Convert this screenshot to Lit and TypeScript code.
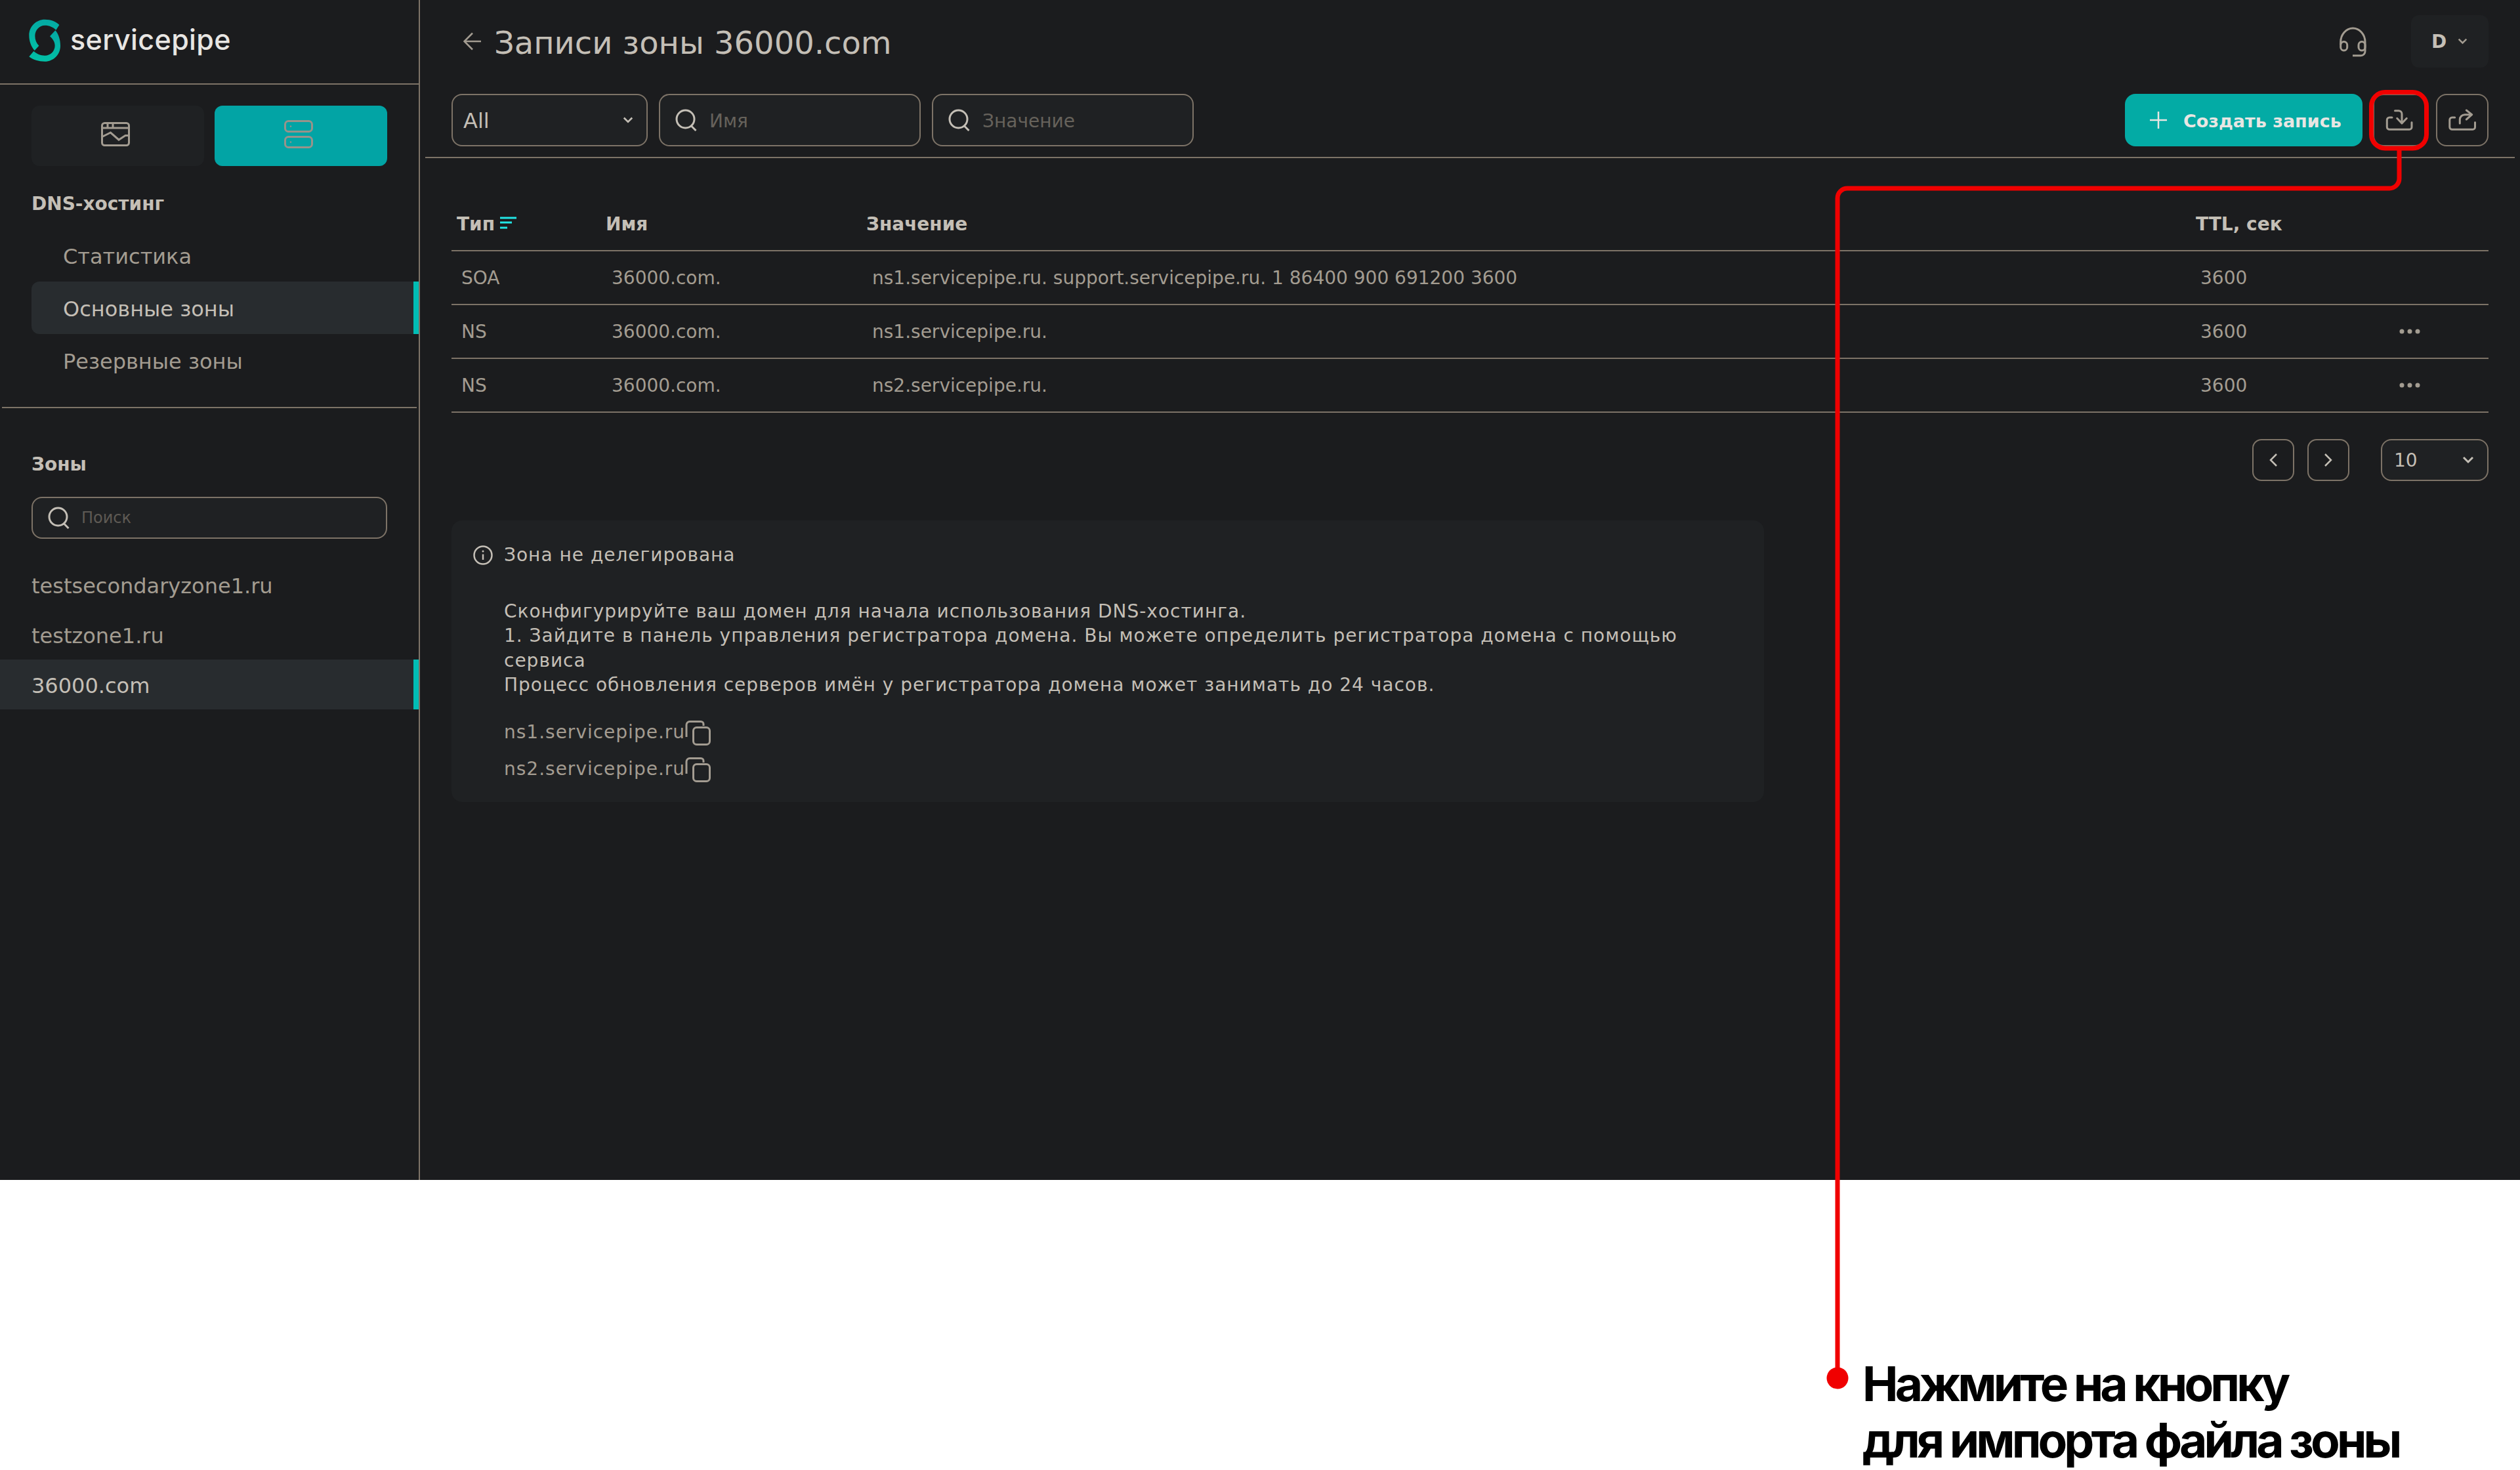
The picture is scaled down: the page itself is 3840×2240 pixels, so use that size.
import { LitElement, html, css, svg } from "lit";
import { customElement } from "lit/decorators.js";

const search = html`<svg class="search" width="34" height="34" viewBox="0 0 34 34" fill="none" stroke="currentColor" stroke-width="3"><circle cx="15.5" cy="15.5" r="13.5"/><path d="M24.5 26l7 7"/></svg>`;
const chevronDown = html`<svg width="18" height="12" viewBox="0 0 18 12" fill="none" stroke="currentColor" stroke-width="3"><path d="M2 2l7 7 7-7"/></svg>`;
const copy = html`<svg class="copy" width="40" height="40" viewBox="0 0 40 40" fill="none" stroke="currentColor" stroke-width="3"><rect x="12.500" y="11.500" width="25" height="26" rx="5"/><path d="M28 9V6.500a4 4 0 0 0-4-4H7a5 5 0 0 0-5 5V26"/></svg>`;
const dots = html`<svg width="32" height="8" viewBox="0 0 32 8" fill="currentColor"><circle cx="4" cy="4" r="3.500"/><circle cx="16" cy="4" r="3.500"/><circle cx="28" cy="4" r="3.500"/></svg>`;

const rows = [
  { t: "SOA", n: "36000.com.", v: "ns1.servicepipe.ru. support.servicepipe.ru. 1 86400 900 691200 3600", ttl: "3600", more: false },
  { t: "NS", n: "36000.com.", v: "ns1.servicepipe.ru.", ttl: "3600", more: true },
  { t: "NS", n: "36000.com.", v: "ns2.servicepipe.ru.", ttl: "3600", more: true },
];

@customElement("app-root")
export class AppRoot extends LitElement {
  static styles = css`
    :host { display: block; width: 3840px; height: 2240px; position: relative; background: #fff; overflow: hidden; font-family: "DejaVu Sans", sans-serif; color: #c4bfb6; }
    * { box-sizing: border-box; }
    .shell { display: grid; grid-template-columns: 640px 1fr; height: 1798px; background: #1b1c1e; }
    .side { border-right: 2px solid #7d7367; display: flex; flex-direction: column; }
    .brand { height: 129px; border-bottom: 2px solid #7d7367; display: flex; align-items: center; margin-right: -2px; padding-left: 36px; padding-bottom: 4px; gap: 0; }
    .brand svg { margin-top: 2px; }
    .brand span { font-family: Inter, sans-serif; font-weight: 500; font-size: 43px; color: #e8e6e3; margin-left: -9px; margin-top: -4px; letter-spacing: 0.4px; }
    .toggle { display: grid; grid-template-columns: 263px 263px; gap: 16px; margin: 32px 0 0 48px; }
    .toggle div { height: 92px; border-radius: 12px; background: #1f2123; display: flex; align-items: center; justify-content: center; color: #a39c91; }
    .toggle div svg { margin-right: 7px; margin-top: -5px; }
    .toggle .on { background: #02a4a5; color: #98938a; }
    .h { font-weight: 700; font-size: 28px; line-height: 32px; color: #c4bfb6; margin-left: 48px; }
    .dns { margin-top: 42px; }
    .nav { margin-top: 22px; display: flex; flex-direction: column; }
    .nav div { height: 80px; margin-left: 48px; padding: 3px 0 0 48px; display: flex; align-items: center; font-size: 32px; color: #a39c91; border-radius: 12px 0 0 12px; }
    .nav .on { background: #282c2f; border-right: 8px solid #00bdb5; color: #c4bfb6; }
    .sep { height: 2px; background: #7d7367; margin: 31px 3px 0; }
    .zones { margin-top: 70px; }
    .side-search { margin: 33px 0 0 48px; width: 542px; height: 64px; border: 2px solid #7d7367; border-radius: 16px; background: #1f2123; display: flex; align-items: center; padding-left: 23px; gap: 17px; font-size: 24px; color: #5e5a54; }
    .side-search .search { color: #c4bfb6; }
    .list { margin-top: 32px; display: flex; flex-direction: column; }
    .list div { height: 76px; padding: 3px 0 0 48px; display: flex; align-items: center; font-size: 32px; color: #a39c91; }
    .list .on { background: #282c2f; border-right: 8px solid #00bdb5; color: #c4bfb6; }

    .main { display: flex; flex-direction: column; min-width: 0; }
    .top { margin-top: 23px; height: 80px; padding: 0 48px 0 66px; display: flex; align-items: center; }
    .title { font-size: 48px; line-height: 80px; margin-left: 19px; margin-top: 4px; flex: 1; }
    .headset { color: #a39c91; margin-right: 67px; margin-top: 2px; }
    .user { width: 118px; height: 80px; border-radius: 12px; background: #1f2123; display: flex; align-items: center; padding-left: 31px; gap: 17px; font-weight: 700; font-size: 28px; }
    .user svg { color: #a39c91; width: 15px; }
    .toolbar { margin: 40px 8px 0; padding: 0 40px 16px; border-bottom: 2px solid #7d7367; display: flex; gap: 17px; }
    .field { height: 80px; border: 2px solid #7d7367; border-radius: 16px; background: #1f2123; display: flex; align-items: center; }
    .sel { width: 299px; padding: 0 20px 0 16px; justify-content: space-between; font-size: 32px; color: #c4bfb6; }
    .sel svg { width: 16px; }
    .inp { width: 399px; padding-left: 23px; gap: 18px; font-size: 28px; color: #66625b; }
    .inp .search { color: #c4bfb6; }
    .sel span, .inp span, .create span { margin-top: 2px; }
    .spacer { flex: 1; }
    .create { width: 362px; height: 80px; border-radius: 16px; background: #03aba5; color: #e8e6e3; display: flex; align-items: center; padding-left: 37px; gap: 24px; font-weight: 700; font-size: 27px; margin-right: -1px; }
    .icon-btn { width: 80px; height: 80px; border: 2px solid #7d7367; border-radius: 16px; display: flex; align-items: center; justify-content: center; color: #a39c91; }
    .icon-btn.first { margin-right: -1px; }
    .table { margin: 0 48px; }
    .tr { display: grid; grid-template-columns: 229px 397px 2024px 310px 1fr; padding-left: 8px; border-bottom: 2px solid #7d7367; align-items: center; font-size: 28px; color: #a39c91; height: 82px; }
    .tr > span { padding-left: 7px; }
    .tr.head { height: 142px; padding-top: 60px; font-weight: 700; font-size: 28px; color: #c4bfb6; }
    .tr.head > span { padding-left: 0; display: flex; align-items: center; gap: 8px; }
    .tr.head > span:nth-child(2), .tr.head > span:nth-child(3) { margin-left: -2px; }
    .sort { display: block; margin-top: -2px; }
    .tr > .more { display: flex; padding-left: 0; }
    .pager { margin: 40px 48px 0; display: flex; justify-content: flex-end; }
    .pg { width: 64px; height: 64px; border: 2px solid #7d7367; border-radius: 14px; display: flex; align-items: center; justify-content: center; color: #c4bfb6; margin-right: 20px; }
    .pg.last { margin-right: 48px; }
    .per { width: 164px; height: 64px; padding: 0 20px 0 18px; justify-content: space-between; font-size: 28px; }
    .card { margin: 60px 0 0 48px; width: 2000px; height: 429px; border-radius: 16px; background: #1f2123; padding: 34px 80px 0 33px; font-size: 28px; line-height: 37.500px; letter-spacing: 1px; }
    .card-head { display: flex; align-items: center; gap: 17px; }
    .body { margin: 48px 0 0 47px; }
    .ns { margin: 35px 0 0 47px; display: flex; flex-direction: column; gap: 19px; color: #a39c91; }
    .ns div { display: flex; align-items: center; height: 37px; }
    .copy { margin-top: 1px; flex: none; }

    .note { position: absolute; left: 2838px; top: 2066px; font-family: Inter, sans-serif; font-weight: 700; font-size: 73px; line-height: 86px; letter-spacing: -4.900px; color: #000; white-space: nowrap; }
    .overlay { position: absolute; inset: 0; pointer-events: none; }
  `;

  render() {
    return html`
      <div class="shell">
        <aside class="side">
          <div class="brand">
            <svg width="80" height="80" viewBox="0 0 240 240">
              <defs><linearGradient id="lg" x1="0" y1="0" x2="0" y2="1"><stop offset="0" stop-color="#04a9a3"/><stop offset="1" stop-color="#02c0a6"/></linearGradient></defs>
              <path fill="url(#lg)" d="M163 45C150 30 125 20 97 20C57 20 25 52 25 92C25 120 35 145 50 162L70 140C58 128 52 112 52 95C52 68 72 47 97 47C118 47 135 55 148 68Z"/>
              <path fill="url(#lg)" d="M145 70L120 97C133 108 143 123 143 140C143 165 122 185 97 185C78 185 60 178 46 165L25 190C43 205 68 212 97 212C137 212 168 180 168 140C168 112 160 88 145 70Z"/>
            </svg>
            <span>servicepipe</span>
          </div>
          <div class="toggle">
            <div>
              <svg width="44" height="37" viewBox="0 0 44 37" fill="none" stroke="currentColor" stroke-width="3"><rect x="1.500" y="1.500" width="41" height="34" rx="4"/><path d="M1.500 9H42.500M10 1.500V9M18 1.500V9M1.500 22.500L14.500 16L27 27L37 20.500H42.500"/></svg>
            </div>
            <div class="on">
              <svg width="44" height="44" viewBox="0 0 44 44" fill="none" stroke="currentColor" stroke-width="3"><rect x="1.500" y="1.500" width="41" height="16" rx="5"/><rect x="1.500" y="25.500" width="41" height="16" rx="5"/><circle cx="10" cy="9.500" r="1.200" fill="currentColor" stroke="none"/><circle cx="10" cy="33.500" r="1.200" fill="currentColor" stroke="none"/></svg>
            </div>
          </div>
          <div class="h dns">DNS-хостинг</div>
          <div class="nav">
            <div>Статистика</div>
            <div class="on">Основные зоны</div>
            <div>Резервные зоны</div>
          </div>
          <div class="sep"></div>
          <div class="h zones">Зоны</div>
          <div class="side-search">${search}<span>Поиск</span></div>
          <div class="list">
            <div>testsecondaryzone1.ru</div>
            <div>testzone1.ru</div>
            <div class="on">36000.com</div>
          </div>
        </aside>
        <main class="main">
          <div class="top">
            <svg width="28" height="28" viewBox="0 0 28 28" fill="none" stroke="#a39c91" stroke-width="2.500"><path d="M27 14H2M14 1.500L1.500 14L14 26.500"/></svg>
            <div class="title">Записи зоны 36000.com</div>
            <svg class="headset" width="44" height="48" viewBox="13 8 44 48" fill="none" stroke="currentColor" stroke-width="3"><rect x="16.700" y="31.500" width="10" height="13.500" rx="5"/><rect x="44" y="31.500" width="10" height="13.500" rx="5"/><path d="M16.700 36V32a18.650 21 0 0 1 37.300 0V46a6.500 6.500 0 0 1-6.500 6.700H35"/></svg>
            <div class="user"><span>D</span>${chevronDown}</div>
          </div>
          <div class="toolbar">
            <div class="field sel"><span>All</span>${chevronDown}</div>
            <div class="field inp">${search}<span>Имя</span></div>
            <div class="field inp">${search}<span>Значение</span></div>
            <div class="spacer"></div>
            <div class="create">
              <svg width="28" height="28" viewBox="0 0 28 28" stroke="currentColor" stroke-width="2.500"><path d="M14 1V27M1 14H27"/></svg>
              <span>Создать запись</span>
            </div>
            <div class="icon-btn first">
              <svg width="48" height="48" viewBox="0 0 48 48" fill="none" stroke="currentColor" stroke-width="3" stroke-linecap="round" stroke-linejoin="round"><path d="M13 20H9a3.700 3.700 0 0 0-3.700 3.700V34.500a3.800 3.800 0 0 0 3.800 3.800H39.500a3.500 3.500 0 0 0 3.500-3.500V27.500"/><path d="M17.500 9.700H23a5 5 0 0 1 5 5V28M20.700 21.300L28 29L35.300 21.300"/></svg>
            </div>
            <div class="icon-btn">
              <svg width="48" height="48" viewBox="0 0 48 48" fill="none" stroke="currentColor" stroke-width="3" stroke-linecap="round" stroke-linejoin="round"><path d="M12.700 20H8.500a3.700 3.700 0 0 0-3.700 3.700V34.500a3.800 3.800 0 0 0 3.800 3.800H40a3.500 3.500 0 0 0 3.500-3.500V27.500"/><path d="M20.300 29V23a7.500 7.500 0 0 1 7.500-7.300H38.500M30.300 9L38.700 15.700L30.300 23"/></svg>
            </div>
          </div>
          <div class="table">
            <div class="tr head">
              <span>Тип<svg class="sort" width="25" height="20" viewBox="0 0 25 20" fill="none" stroke="#22e5e5" stroke-width="3"><path d="M0 2H25M0 9H18M0 17H11"/></svg></span>
              <span>Имя</span><span>Значение</span><span>TTL, сек</span><span></span>
            </div>
            ${rows.map(r => html`
              <div class="tr">
                <span>${r.t}</span><span>${r.n}</span><span>${r.v}</span><span>${r.ttl}</span>
                <span class="more">${r.more ? dots : ""}</span>
              </div>`)}
          </div>
          <div class="pager">
            <div class="pg"><svg width="14" height="22" viewBox="0 0 14 22" fill="none" stroke="currentColor" stroke-width="2.500"><path d="M12 2L3 11L12 20"/></svg></div>
            <div class="pg last"><svg width="14" height="22" viewBox="0 0 14 22" fill="none" stroke="currentColor" stroke-width="2.500"><path d="M2 2L11 11L2 20"/></svg></div>
            <div class="field per"><span>10</span>${chevronDown}</div>
          </div>
          <section class="card">
            <div class="card-head">
              <svg width="30" height="30" viewBox="0 0 30 30" fill="none" stroke="currentColor" stroke-width="2.500"><circle cx="15" cy="15" r="13.500"/><path d="M15 13.500V22"/><circle cx="15" cy="9" r="1.500" fill="currentColor" stroke="none"/></svg>
              <span>Зона не делегирована</span>
            </div>
            <div class="body">
              Сконфигурируйте ваш домен для начала использования DNS-хостинга.<br>
              1. Зайдите в панель управления регистратора домена. Вы можете определить регистратора домена с помощью сервиса<br>
              Процесс обновления серверов имён у регистратора домена может занимать до 24 часов.
            </div>
            <div class="ns">
              <div><span>ns1.servicepipe.ru</span>${copy}</div>
              <div><span>ns2.servicepipe.ru</span>${copy}</div>
            </div>
          </section>
        </main>
      </div>
      <div class="note">Нажмите на кнопку<br>для импорта файла зоны</div>
      <svg class="overlay" width="3840" height="2240" viewBox="0 0 3840 2240" fill="none" stroke="#f00000" stroke-width="7">
        ${svg`<rect x="3613.500" y="140.500" width="84" height="85.500" rx="21"/>
        <path d="M3656 228V272a15 15 0 0 1-15 15H2815a15 15 0 0 0-15 15V2100"/>
        <circle cx="2800" cy="2100" r="16.500" fill="#f00000" stroke="none"/>`}
      </svg>
    `;
  }
}
